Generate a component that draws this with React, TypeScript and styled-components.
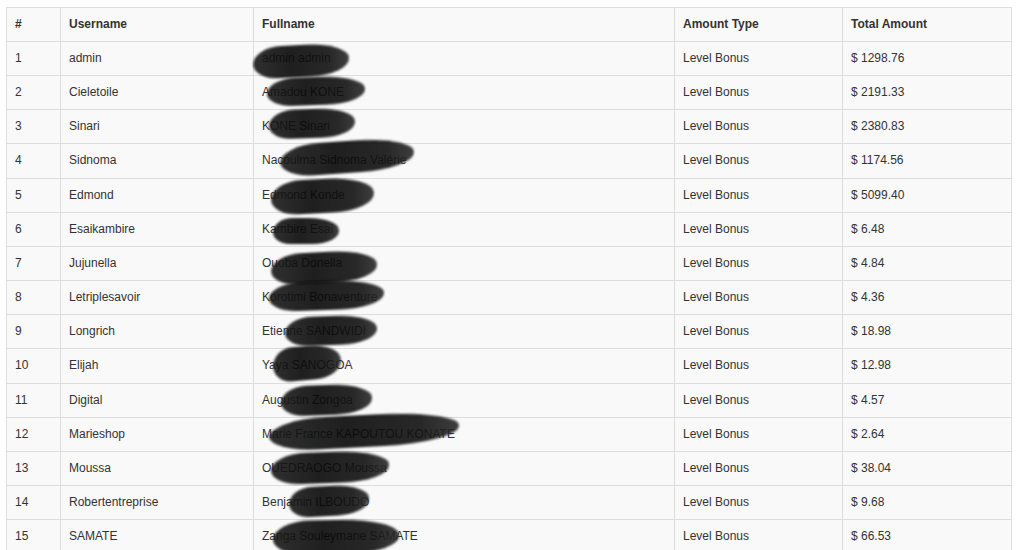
import React from "react";
import styled, { createGlobalStyle } from "styled-components";

const GlobalStyle = createGlobalStyle`
  body {
    margin: 0;
    background: #fff;
    font-family: "Liberation Sans", Arial, sans-serif;
  }
`;

const Wrapper = styled.div`
  padding: 7px 8px 0 6px;
`;

const Table = styled.table`
  width: 1005px;
  border-collapse: collapse;
  table-layout: fixed;
  background: #f9f9f9;
  font-size: 12px;
  color: #333;
`;

const Th = styled.th`
  text-align: left;
  font-weight: bold;
  padding: 8px;
  line-height: 17px;
  border: 1px solid #ddd;
`;

const Td = styled.td`
  position: relative;
  padding: 8px;
  line-height: 17.15px;
  border: 1px solid #ddd;
  white-space: nowrap;
  overflow: visible;
`;

const Redact = styled.span<{ $l: number; $t: number; $w: number; $h: number; $r: number }>`
  position: absolute;
  left: ${(p) => p.$l}px;
  top: ${(p) => p.$t}px;
  width: ${(p) => p.$w}px;
  height: ${(p) => p.$h}px;
  background: linear-gradient(90deg, #1a1a1a 0%, #080808 40%, #121212 80%, #2a2a2a 100%);
  opacity: 0.9;
  border-radius: 30% 45% 40% 25% / 55% 45% 50% 45%;
  filter: blur(1.2px);
  transform: rotate(${(p) => p.$r}deg);
  z-index: 1;
`;

type Row = {
  user: string;
  full: string;
  total: string;
  blob: [number, number, number, number, number];
};

const rows: Row[] = [
  { user: "admin", full: "admin admin", total: "1298.76", blob: [-1, 3, 96, 32, -3] },
  { user: "Cieletoile", full: "Amadou KONE", total: "2191.33", blob: [13, 1, 98, 28, -2] },
  { user: "Sinari", full: "KONE Sinari", total: "2380.83", blob: [15, -1, 86, 29, -2] },
  { user: "Sidnoma", full: "Nacoulma Sidnoma Valérie", total: "1174.56", blob: [26, -3, 134, 32, -4] },
  { user: "Edmond", full: "Edmond Konde", total: "5099.40", blob: [17, 0, 103, 34, -3] },
  { user: "Esaikambire", full: "Kambire Esai", total: "6.48", blob: [19, 5, 66, 26, 0] },
  { user: "Jujunella", full: "Ouoba Donella", total: "4.84", blob: [17, 5, 106, 31, -3] },
  { user: "Letriplesavoir", full: "Korotimi Bonaventure", total: "4.36", blob: [15, 0, 115, 29, -2] },
  { user: "Longrich", full: "Etienne SANDWIDI", total: "18.98", blob: [31, 1, 92, 29, -2] },
  { user: "Elijah", full: "Yaya SANOGOA", total: "12.98", blob: [19, -3, 68, 34, -5] },
  { user: "Digital", full: "Augustin Zongoa", total: "4.57", blob: [27, 1, 91, 30, -2] },
  { user: "Marieshop", full: "Marie France KAPOUTOU KONATE", total: "2.64", blob: [15, -3, 190, 32, -3] },
  { user: "Moussa", full: "OUEDRAOGO Moussa", total: "38.04", blob: [17, 0, 118, 31, -2] },
  { user: "Robertentreprise", full: "Benjamin ILBOUDO", total: "9.68", blob: [35, 0, 80, 30, -3] },
  { user: "SAMATE", full: "Zanga Souleymane SAMATE", total: "66.53", blob: [19, 0, 126, 34, -1] },
];

const App = () => {
  return (
    <Wrapper>
      <GlobalStyle />
      <Table>
        <colgroup>
          <col style={{ width: 54 }} />
          <col style={{ width: 193 }} />
          <col style={{ width: 421 }} />
          <col style={{ width: 168 }} />
          <col style={{ width: 169 }} />
        </colgroup>
        <thead>
          <tr>
            <Th>#</Th>
            <Th>Username</Th>
            <Th>Fullname</Th>
            <Th>Amount Type</Th>
            <Th>Total Amount</Th>
          </tr>
        </thead>
        <tbody>
          {rows.map((r, i) => (
            <tr key={r.user}>
              <Td>{i + 1}</Td>
              <Td>{r.user}</Td>
              <Td>
                {r.full}
                <Redact $l={r.blob[0]} $t={r.blob[1]} $w={r.blob[2]} $h={r.blob[3]} $r={r.blob[4]} />
              </Td>
              <Td>Level Bonus</Td>
              <Td>$ {r.total}</Td>
            </tr>
          ))}
        </tbody>
      </Table>
    </Wrapper>
  );
};

export default App;
